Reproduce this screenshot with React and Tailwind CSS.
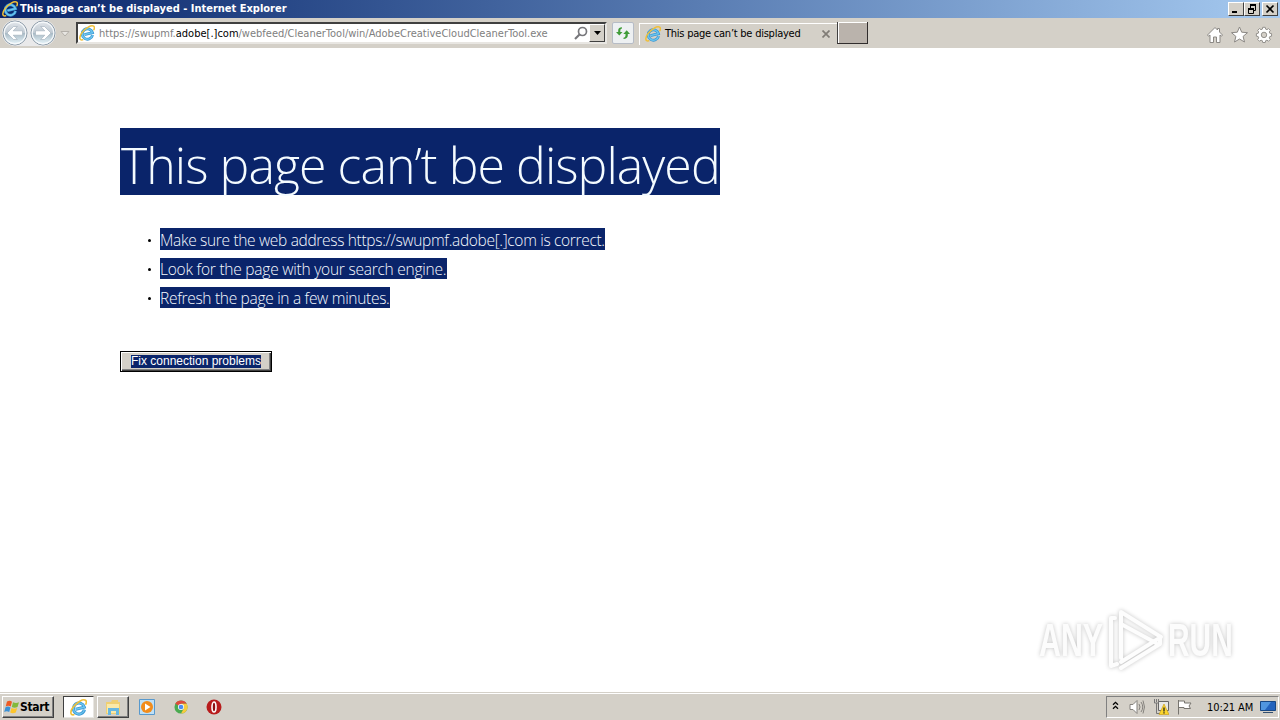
import React from 'react';

const IELogo = ({ className }) => (
  <svg viewBox="0 0 16 16" className={className} fill="none">
    <g transform="rotate(-14 8 8.500)">
      <path d="M13 11.300A5.200 5.200 0 1 1 13.500 9H5.200" stroke="#3a97d3" strokeWidth="2.900" />
      <path d="M13 11.300A5.200 5.200 0 1 1 13.500 9H5.200" stroke="#6cc6ef" strokeWidth="1.300" />
    </g>
    <path
      d="M3.600 14.800C.2 15.600-.2 11.800 3 7.600 6.400 3 12.300-.4 14.600 1.200c1.200.8.9 2.200.3 3.600"
      stroke="#f0bf38"
      strokeWidth="1.500"
      strokeLinecap="round"
    />
  </svg>
);

const NavButton = ({ flip }) => (
  <svg viewBox="0 0 26 26" className={flip ? 'w-[26px] h-[26px] -scale-x-100' : 'w-[26px] h-[26px]'}>
    <defs>
      <linearGradient id={flip ? 'navFwd' : 'navBack'} x1="0" y1="0" x2="0" y2="1">
        <stop offset="0" stopColor="#e4e7ec" />
        <stop offset="0.48" stopColor="#c0cad3" />
        <stop offset="0.52" stopColor="#a9bbc6" />
        <stop offset="1" stopColor="#edfaff" />
      </linearGradient>
    </defs>
    <circle cx="13" cy="13" r="12" fill={flip ? 'url(#navFwd)' : 'url(#navBack)'} stroke="#8796a4" />
    <circle cx="13" cy="13" r="10.800" fill="none" stroke="#f6f9fb" strokeWidth="1.200" />
    <path d="M5 13l6.500-6.500h3.800l-4.100 4.300h9.300v4.400h-9.300l4.100 4.300h-3.800z" fill="#fff" stroke="#a0acb8" strokeWidth=".6" />
  </svg>
);

const WindowButton = ({ children }) => (
  <div className="w-4 h-[14px] bg-[#d4d0c8] border border-t-white border-l-white border-r-[#404040] border-b-[#404040] flex items-center justify-center">
    <svg viewBox="0 0 12 10" className="w-3 h-[10px]" fill="none" stroke="#000">{children}</svg>
  </div>
);

const TitleBar = () => (
  <div className="h-[18px] flex items-center bg-linear-to-r from-[#0a246a] to-[#a6caf0] pr-[2px]">
    <IELogo className="w-4 h-4 ml-[2px]" />
    <span className="ml-[2px] font-['DejaVu_Sans_Condensed','DejaVu_Sans',sans-serif] [font-stretch:condensed] font-bold text-[11px] leading-[18px] text-white whitespace-nowrap">
      This page can’t be displayed - Internet Explorer
    </span>
    <div className="ml-auto flex">
      <WindowButton><path d="M2 8h5" strokeWidth="2" /></WindowButton>
      <WindowButton>
        <path d="M4 1h6M2 5h6" strokeWidth="2" />
        <path d="M4.500 1v3M9.500 1v5.500H8M2.500 5v4.500h5V5" />
      </WindowButton>
      <div className="w-[2px]" />
      <WindowButton><path d="M2.500 1.500l7 7M9.500 1.500l-7 7" strokeWidth="1.700" /></WindowButton>
    </div>
  </div>
);

const Toolbar = () => (
  <div className="h-[30px] bg-[#d4d0c8] flex items-start font-['DejaVu_Sans_Condensed','DejaVu_Sans',sans-serif] [font-stretch:condensed] text-[11px]">
    <div className="flex gap-[2px] ml-[2px] mt-[2px] h-[26px] rounded-full bg-[#e9e9ea]">
      <NavButton />
      <NavButton flip />
    </div>
    <svg viewBox="0 0 10 6" className="w-[10px] h-[6px] ml-[4px] mt-[13px]"><path d="M1 .5h8L5 5z" fill="#e8e6e2" stroke="#b4b0aa" /></svg>
    <div className="ml-[6px] mt-[4px] w-[531px] h-[22px] bg-white border-2 border-t-[#404040] border-l-[#404040] border-r-[#e8e6e2] border-b-[#e8e6e2] flex items-center">
      <IELogo className="w-4 h-4 ml-[1px]" />
      <span className="ml-[4px] mt-[2px] text-[#808080] whitespace-nowrap">
        https://swupmf.<span className="text-black">adobe[.]com</span>/webfeed/CleanerTool/win/AdobeCreativeCloudCleanerTool.exe
      </span>
      <svg viewBox="0 0 14 14" className="w-[14px] h-[14px] ml-auto mr-[1px]" fill="none" stroke="#77777b">
        <circle cx="8.500" cy="5.500" r="4" strokeWidth="1.700" />
        <path d="M5.500 8.500L1 13" strokeWidth="2.200" />
      </svg>
      <div className="w-4 h-[18px] bg-[#d4d0c8] border border-t-white border-l-white border-r-[#404040] border-b-[#404040] flex items-center justify-center">
        <svg viewBox="0 0 7 4" className="w-[7px] h-[4px]"><path d="M0 0h7L3.500 4z" /></svg>
      </div>
    </div>
    <div className="ml-[5px] mt-[4px] w-[22px] h-[22px] rounded-[2px] border border-[#b6bcc6] bg-[#edf0f2] flex items-center justify-center">
      <svg viewBox="0 0 16 16" className="w-4 h-4" fill="#3f9c38">
        <path d="M7 2.200v1.300C5.900 3.700 5.300 4.400 5.300 5.500V7H7.500L4.300 10.500 1 7h2.200V5.500C3.200 3.200 4.700 2.200 7 2.200z" />
        <path d="M8.500 14v-1.300c1.300-.2 2-1 2-2.200V9H8.300l3.400-3.700L15 9h-2.200v1.500c0 2.300-1.800 3.500-4.300 3.500z" />
      </svg>
    </div>
    <div className="ml-[5px] mt-[5px] w-[198px] h-[22px] border-l border-t border-white flex items-center">
      <IELogo className="w-4 h-4 ml-[5px] mb-[2px]" />
      <span className="ml-[4px] text-black whitespace-nowrap tracking-[-0.240px]">This page can’t be displayed</span>
      <svg viewBox="0 0 8 8" className="w-2 h-2 ml-auto mr-[7px] mb-[2px]"><path d="M.5.5l7 7M7.500.5l-7 7" stroke="#807c76" strokeWidth="1.700" /></svg>
    </div>
    <div className="mt-[4px] w-[31px] h-[22px] bg-[#bab3ac] border-l border-l-[#404040] border-r border-r-[#302c2c] border-b border-b-[#302c2c] shadow-[inset_1px_1px_0_#fff]" />
    <svg viewBox="0 0 68 20" className="w-[68px] h-5 ml-auto mr-[6px] mt-[7px]" fill="#fff" stroke="#8b8884">
      <path d="M1.500 10L9 2.500l2.500 2.500V3.500h2V7l3 3-1 1.200-1.500-1.200v7.500h-3.500V12h-3v5.500H4V10l-1.500 1.200z" />
      <path d="M33.500 2l2.200 5.200 5.800.5-4.400 3.700 1.400 5.600-5-3-5 3 1.400-5.600-4.400-3.700 5.800-.5z" />
      <g transform="translate(5.500 .5) scale(.905)">
        <path d="M56.600 2h2.800l.4 2 1.500.6 1.700-1.200 2 2-1.200 1.700.6 1.500 2 .4v2.800l-2 .4-.6 1.500 1.200 1.700-2 2-1.700-1.200-1.500.6-.4 2h-2.800l-.4-2-1.500-.6-1.700 1.200-2-2 1.200-1.700-.6-1.500-2-.4V9l2-.4.6-1.500L51 5.400l2-2 1.700 1.200 1.500-.6z" />
        <circle cx="58" cy="10.400" r="3" fill="#d4d0c8" />
      </g>
    </svg>
  </div>
);

const tips = [
  { text: 'Make sure the web address https://swupmf.adobe[.]com is correct.', cls: 'h-[22px] w-[445px] leading-[25px] tracking-[-0.320px]' },
  { text: 'Look for the page with your search engine.', cls: 'h-[21px] w-[287px] leading-[23px] tracking-[-0.230px]' },
  { text: 'Refresh the page in a few minutes.', cls: 'h-[21px] w-[230px] leading-[23px] tracking-[-0.300px]' },
];

const Watermark = () => (
  <div className="absolute right-[47px] bottom-[20px] flex items-center drop-shadow-[0_0_2px_#c4c4c4] text-[#fcfcfc] font-['Liberation_Sans',sans-serif] font-bold text-[46px] leading-[64px]">
    <div className="w-[65px]"><span className="inline-block origin-left scale-x-[0.660]">ANY</span></div>
    <svg viewBox="0 0 60 64" className="w-[60px] h-16 mx-[2px]" fill="none" stroke="#fdfdfd" strokeWidth="4" strokeLinejoin="round" strokeLinecap="round">
      <path d="M15 50V4l40 25-40 25" />
      <path d="M9 10H5v48l6-2M15 16l35 19M15 60l39-24V29" />
    </svg>
    <div className="w-[65px]"><span className="inline-block origin-left scale-x-[0.650]">RUN</span></div>
  </div>
);

const ErrorPage = () => (
  <div className="relative h-[644px] bg-white pl-[120px] pt-[80px] font-['Open_Sans',sans-serif]">
    <h1 className="w-[600px] h-[67px] pl-[1px] bg-[#0a246a] text-[#f4fbff] font-light text-[50px] leading-[74px] tracking-[-0.940px] whitespace-nowrap">
      This page can’t be displayed
    </h1>
    <ul className="mt-[33px] pl-[40px] flex flex-col gap-2">
      {tips.map(tip => (
        <li key={tip.text} className="flex items-center">
          <span className="w-[3px] h-[3px] mt-[2px] rounded-full bg-black -ml-[12px] mr-[9px]" />
          <span className={`${tip.cls} block bg-[#0a246a] text-[#f6faff] font-light text-[15.5px] whitespace-nowrap`}>{tip.text}</span>
        </li>
      ))}
    </ul>
    <button className="mt-[43px] w-[152px] h-[21px] bg-[#d4d0c8] border border-black flex items-center justify-center shadow-[inset_1px_1px_0_#fff,inset_-1px_-1px_0_#404040,inset_-2px_-2px_0_#808080]">
      <span className="bg-[#0a246a] text-white font-['Liberation_Sans',sans-serif] text-[12px] leading-[13px] whitespace-nowrap">Fix connection problems</span>
    </button>
    <Watermark />
  </div>
);

const Taskbar = () => (
  <div className="h-7 bg-[#d4d0c8] border-t border-[#d4d0c8] shadow-[inset_0_1px_0_#fff] flex items-start pt-[3px] font-['DejaVu_Sans_Condensed','DejaVu_Sans',sans-serif] [font-stretch:condensed]">
    <div className="ml-[2px] w-[52px] h-[22px] border border-t-white border-l-white border-r-[#404040] border-b-[#404040] shadow-[inset_-1px_-1px_0_#808080] flex items-center">
      <svg viewBox="0 0 16 16" className="w-4 h-4 ml-[1px]">
        <path d="M3 2.500q3-1.500 5 .2L6.700 7.500q-2.500-1.500-5 0z" fill="#ee5b24" />
        <path d="M9 3.200q3 1.500 6 0L13.500 8q-3 1.500-5.700 0z" fill="#83b93b" />
        <path d="M1.500 8.300q2.500-1.500 5 .1L5.200 13q-2.400-1.600-5 0z" fill="#3b91d6" />
        <path d="M7.500 9q3 1.500 5.700 0l-1.400 4.500q-3 1.500-5.600 0z" fill="#fdc52c" />
      </svg>
      <span className="font-bold text-[12px] leading-4 text-black tracking-[-0.300px]">Start</span>
    </div>
    <div className="ml-[9px] w-[31px] h-[22px] bg-white border border-t-[#404040] border-l-[#404040] border-r-[#e8e6e2] border-b-[#e8e6e2] flex items-center justify-center">
      <IELogo className="w-[17px] h-[17px]" />
    </div>
    <div className="ml-[3px] w-[32px] h-[22px] border border-t-white border-l-white border-r-[#404040] border-b-[#404040] shadow-[inset_-1px_-1px_0_#808080] flex items-center justify-center">
      <svg viewBox="0 0 16 16" className="w-4 h-4">
        <path d="M1 3h5l1-2h6v2h2v12H1z" fill="#efcf72" />
        <path d="M2 5h12v9H2z" fill="#fae9a8" />
        <path d="M3 16V9h11v7h-3v-4H6v4z" fill="#67b7e1" />
      </svg>
    </div>
    <svg viewBox="0 0 16 16" className="w-4 h-4 ml-[10px] mt-[3px]">
      <path d="M.5.5h15v15H.5z" fill="#bfe0f6" stroke="#5899cd" />
      <circle cx="8" cy="8" r="6" fill="#f28c1b" />
      <path d="M6 4.500v7L11.500 8z" fill="#fff" />
    </svg>
    <svg viewBox="0 0 16 16" className="w-[14px] h-[14px] ml-[19px] mt-[4px]">
      <circle cx="8" cy="8" r="7.500" fill="#4aaa50" />
      <path d="M8 8L1.500 4.200A7.500 7.500 0 0 1 14.500 4.200H8z" fill="#df493c" />
      <path d="M8 4.200h6.500A7.500 7.500 0 0 1 8 15.500L11.500 9z" fill="#f7cb3d" />
      <circle cx="8" cy="8" r="3.500" fill="#fff" />
      <circle cx="8" cy="8" r="2.700" fill="#4c8cf0" />
    </svg>
    <svg viewBox="0 0 16 16" className="w-4 h-4 ml-[18px] mt-[3px]">
      <circle cx="8" cy="8" r="7.500" fill="#b81c1c" />
      <ellipse cx="8" cy="8" rx="2" ry="5" fill="#8e1012" stroke="#fff" strokeWidth="1.600" />
    </svg>
    <div className="ml-auto mr-[1px] w-[173px] h-[22px] border border-t-[#808080] border-l-[#808080] border-r-white border-b-white flex items-center">
      <svg viewBox="0 0 7 9" className="w-[7px] h-[9px] ml-[5px] mb-[3px]" fill="none" stroke="#000" strokeWidth="1.300"><path d="M1 3.800l2.500-2.500L6 3.800M1 7.800l2.500-2.500L6 7.800" /></svg>
      <svg viewBox="0 0 16 16" className="w-4 h-4 ml-[10px]" fill="none" stroke="#85827e">
        <path d="M1 5.500h3l4-4v13l-4-4H1z" fill="#fff" />
        <path d="M10 5q2 3 0 6M12 3q3.500 5 0 10M14 1.500q3 6.500 0 13" />
      </svg>
      <svg viewBox="0 0 16 16" className="w-4 h-4 ml-[8px]">
        <path d="M5.500 2.500h10v9h-10z" fill="#e8e8e6" stroke="#666" />
        <path d="M1.500 0v4h4V0M3.500 4v10.500h5M3.500 0v3" fill="none" stroke="#777" />
        <path d="M11 5l5 10.500H6z" fill="#fbd52c" stroke="#c79a10" strokeWidth=".6" />
        <path d="M11 8.500v4M11 13.300v1.200" stroke="#222" strokeWidth="1.300" />
      </svg>
      <svg viewBox="0 0 16 16" className="w-4 h-4 ml-[7px]" fill="#fff" stroke="#77746f">
        <path d="M2.500 1v14.500M2.500 2h6v2H15l-2 3 1.500 2.500H8v-1H2.500" />
      </svg>
      <span className="ml-[15px] mt-[1px] text-[11px] leading-4 text-black whitespace-nowrap tracking-[-0.100px]">10:21 AM</span>
      <svg viewBox="0 0 16 14" className="w-4 h-[14px] ml-auto mr-[2px]">
        <path d="M.5 1.500h15v9H.5z" fill="#2363bd" stroke="#174783" />
        <path d="M1 2h10L5 10H1z" fill="#5096df" />
        <path d="M3 12.500h10" stroke="#334e6e" />
      </svg>
    </div>
  </div>
);

export default function App() {
  return (
    <div className="w-[1280px] h-[720px] overflow-hidden flex flex-col bg-white">
      <TitleBar />
      <Toolbar />
      <ErrorPage />
      <Taskbar />
    </div>
  );
}
